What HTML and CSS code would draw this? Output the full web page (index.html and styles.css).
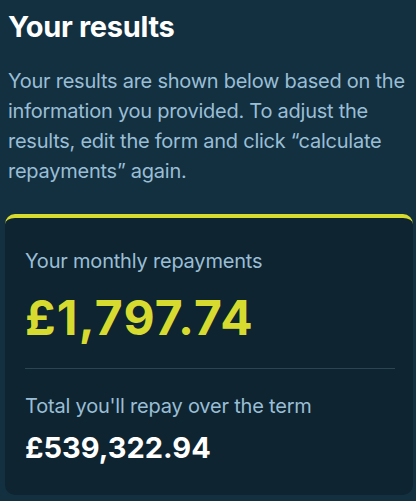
FILE: index.html
```html
<!DOCTYPE html>
<html lang="en">
<head>
<meta charset="utf-8">
<title>Your results</title>
<link rel="stylesheet" href="styles.css">
</head>
<body>
<section class="results">
  <div class="intro">
    <h2 class="title">Your results</h2>
    <p class="desc">Your results are shown below based on the information you provided. To adjust the results, edit the form and click “calculate repayments” again.</p>
  </div>
  <div class="card">
    <p class="label">Your monthly repayments</p>
    <p class="monthly">£1,797.74</p>
    <hr class="divider">
    <p class="label">Total you'll repay over the term</p>
    <p class="total">£539,322.94</p>
  </div>
</section>
</body>
</html>
```
FILE: styles.css
```css
html, body {
  margin: 0;
  padding: 0;
  background: #133041;
}
body {
  font-family: "Inter", "Noto Sans", sans-serif;
  width: 416px;
  height: 501px;
  overflow: hidden;
}
.results {
  display: flex;
  flex-direction: column;
  padding: 0 3px 0 5px;
}
.intro {
  padding-left: 3px;
}
.title {
  margin: 0;
  padding-top: 9px;
  font-size: 29px;
  line-height: 36px;
  font-weight: 700;
  color: #ffffff;
  letter-spacing: -0.3px;
}
.desc {
  margin: 21px 0 0;
  font-size: 20px;
  line-height: 30px;
  color: #9abed5;
  letter-spacing: -0.25px;
}
.card {
  margin-top: 28px;
  background: #0e2431;
  border-top: 4px solid #d8db2f;
  border-radius: 10px;
  padding: 29px 18px 29px 20px;
  display: flex;
  flex-direction: column;
}
.label {
  margin: 0;
  font-size: 20px;
  line-height: 28px;
  color: #9abed5;
  letter-spacing: -0.2px;
}
.monthly {
  margin: 15px 0 0;
  font-size: 48px;
  line-height: 56px;
  font-weight: 700;
  color: #d8db2f;
  letter-spacing: 1.2px;
}
.divider {
  margin: 22px 0 23px;
  border: 0;
  height: 1px;
  background: #2b4552;
}
.total {
  margin: 10px 0 0;
  font-size: 29px;
  line-height: 36px;
  font-weight: 700;
  color: #ffffff;
}
```
